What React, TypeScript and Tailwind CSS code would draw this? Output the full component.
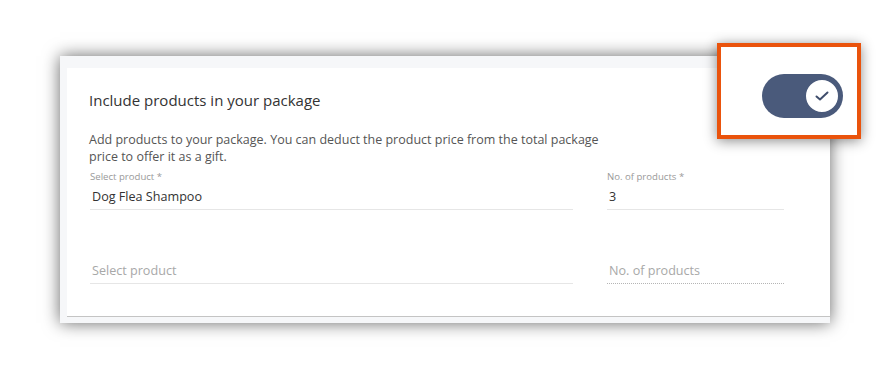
import React from "react";

function Field({
  label,
  value,
  placeholder,
  dotted,
  className,
}: {
  label?: string;
  value?: string;
  placeholder?: string;
  dotted?: boolean;
  className?: string;
}) {
  return (
    <div className={"flex flex-col " + (className ?? "")}>
      <div className="h-[12px] text-[9.6px] leading-[12px] text-[#9a9a9a]">{label ?? ""}</div>
      <div
        className={
          "mt-[5px] h-[22px] pl-[2px] text-[12.6px] leading-[18px] " +
          (dotted ? "border-b border-dotted border-[#b5b5b5]" : "border-b border-[#e6e6e6]") +
          (value ? " text-[#333]" : " text-[#a8a8a8]")
        }
      >
        {value ?? placeholder}
      </div>
    </div>
  );
}

export default function App() {
  return (
    <div
      className="relative w-[896px] h-[391px] bg-white overflow-hidden"
      style={{ fontFamily: '"Open Sans", "Noto Sans", sans-serif' }}
    >
      <div className="pt-[56px] pl-[60px]">
        <div className="w-[770px] h-[267px] bg-[#f6f7f9] pt-[12px] pl-[7px] pb-[6px] shadow-[0_0_16px_rgba(0,0,0,0.6)] flex flex-col">
          <div className="flex-1 bg-white border-b border-[#c4c4c4] pt-[22px] pl-[22px] pr-[46px]">
            <div className="text-[15px] leading-[20px] text-[#333]">Include products in your package</div>
            <div className="mt-[21px] w-[525px] text-[12.5px] leading-[17px] text-[#555]">
              Add products to your package. You can deduct the product price from the total package price to offer it as a gift.
            </div>
            <div className="mt-[6px] flex gap-[34px] pl-[1px]">
              <Field className="w-[483px]" label="Select product *" value="Dog Flea Shampoo" />
              <Field className="w-[177px]" label="No. of products *" value="3" />
            </div>
            <div className="mt-[35px] flex gap-[34px] pl-[1px]">
              <Field className="w-[483px]" placeholder="Select product" />
              <Field className="w-[177px]" placeholder="No. of products" dotted />
            </div>
          </div>
        </div>
      </div>

      <div className="absolute left-[717px] top-[43px] w-[144px] h-[96px] bg-white border-[4px] border-[#ea530c] shadow-[0_2px_12px_rgba(0,0,0,0.45)] flex justify-end pt-[27px] pr-[14px]">
        <div className="w-[81px] h-[44px] rounded-full bg-[#4a5a7b] flex items-center justify-end pr-[3px]">
          <div className="w-[36px] h-[36px] rounded-full bg-white border-[2px] border-[#4a5a7b] flex items-center justify-center">
            <svg width="16" height="12" viewBox="0 0 16 12" fill="none">
              <path d="M2.5 6.5 L6 9.5 L13.5 2.5" stroke="#3f4d6c" strokeWidth="2" strokeLinecap="round" strokeLinejoin="round" />
            </svg>
          </div>
        </div>
      </div>
    </div>
  );
}
